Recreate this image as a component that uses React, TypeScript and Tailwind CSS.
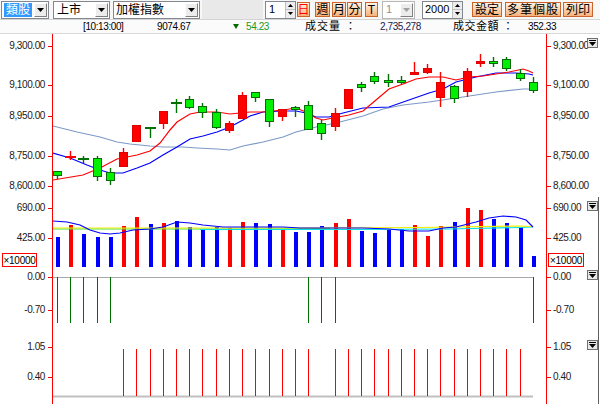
import React from "react"

// candle: [color, bodyTop, bodyBottom, wickTop, wickBottom] in page pixels
const candles: [string, number, number, number, number][] = [
  ["g", 171, 176, 171, 179],
  ["r", 157, 157, 151, 160],
  ["g", 159, 159, 156, 163],
  ["g", 158, 177, 156, 181],
  ["g", 172, 181, 168, 185],
  ["r", 152, 167, 148, 167],
  ["r", 125, 142, 125, 142],
  ["g", 128, 128, 128, 138],
  ["r", 111, 124, 111, 129],
  ["g", 103, 103, 99, 113],
  ["g", 99, 108, 96, 109],
  ["g", 106, 113, 103, 118],
  ["g", 112, 128, 109, 129],
  ["r", 123, 131, 121, 133],
  ["r", 95, 119, 92, 119],
  ["g", 92, 98, 92, 102],
  ["g", 99, 122, 99, 127],
  ["r", 109, 117, 109, 121],
  ["g", 107, 110, 106, 117],
  ["g", 105, 130, 101, 130],
  ["g", 123, 134, 120, 140],
  ["r", 113, 127, 108, 131],
  ["r", 89, 109, 89, 109],
  ["g", 84, 88, 82, 92],
  ["g", 76, 82, 72, 84],
  ["g", 80, 83, 74, 87],
  ["g", 80, 83, 76, 84],
  ["r", 72, 75, 62, 75],
  ["r", 68, 73, 64, 74],
  ["r", 82, 98, 72, 107],
  ["g", 86, 99, 85, 103],
  ["r", 71, 92, 68, 97],
  ["r", 61, 64, 54, 67],
  ["g", 61, 64, 57, 67],
  ["g", 59, 69, 57, 71],
  ["g", 73, 79, 69, 81],
  ["g", 82, 91, 77, 93],
]

const volumes: [number, string][] = [
  [237, "b"], [225, "r"], [234, "b"], [237, "b"], [237, "b"], [226, "r"], [217, "r"], [224, "b"],
  [223, "r"], [221, "b"], [227, "b"], [230, "b"], [227, "b"], [228, "r"], [222, "r"], [223, "b"],
  [224, "b"], [229, "r"], [232, "b"], [232, "b"], [226, "b"], [223, "r"], [219, "r"], [231, "b"],
  [233, "b"], [230, "b"], [229, "b"], [225, "r"], [236, "r"], [226, "r"], [222, "b"], [208, "r"],
  [210, "r"], [219, "b"], [223, "b"], [227, "b"], [256, "b"],
]

const negIdx = [0, 1, 2, 3, 4, 19, 20, 21, 36]
const posIdx = [5, 6, 7, 8, 9, 10, 11, 12, 13, 14, 15, 16, 17, 18, 19, 21, 22, 23, 24, 25, 26, 27, 28, 29, 30, 31, 32, 33, 34, 35]

const ma5 =
  "53,180 83,175 100,168 117,159 137,155 150,151 160,143 170,130 177,122 190,114 200,112 217,112 230,114 240,113 250,112 263,112 283,110 296,108 306,112 316,118 323,120 333,118 349,115 363,111 376,100 389,89 403,84 416,79 429,77 443,77 456,80 469,77 483,76 496,74 509,72 523,69 529,71 533,73"
const ma10 =
  "53,153 70,158 87,165 100,170 110,173 123,173 137,168 150,163 163,155 177,147 190,139 203,136 217,132 230,127 243,120 250,116 263,112 283,111 296,111 306,113 316,117 329,117 343,113 363,108 389,107 409,100 429,93 443,89 456,82 476,77 496,73 516,73 529,74 533,75"
const ma20 =
  "53,126 77,132 100,137 117,142 130,144 150,146 163,147 183,147 197,148 217,149 230,150 243,146 263,142 283,137 296,132 316,127 336,123 363,116 383,109 403,105 429,102 456,98 476,95 496,92 523,89 533,89"
const vma5 =
  "53,221 67,222 80,225 90,230 100,233 110,234 120,233 133,230 150,229 163,227 177,222 190,223 203,225 223,227 250,227 283,227 300,228 323,228 336,228 363,228 389,229 409,231 429,231 443,228 456,227 476,222 489,218 503,216 516,217 526,220 533,227"

const X = (i: number) => Math.round(57 + 13.22 * i)

const leftLabels = [
  { t: "9,300.00", y: 46 },
  { t: "9,100.00", y: 85 },
  { t: "8,950.00", y: 116 },
  { t: "8,750.00", y: 156 },
  { t: "8,600.00", y: 186 },
  { t: "690.00", y: 208 },
  { t: "425.00", y: 238 },
  { t: "0.00", y: 277 },
  { t: "-0.70", y: 310 },
  { t: "1.05", y: 347 },
  { t: "0.40", y: 377 },
]

function Arrow({ color = "#000" }: { color?: string }) {
  return (
    <svg width="7" height="4" viewBox="0 0 7 4">
      <path d="M0 0H7L3.5 4Z" fill={color} />
    </svg>
  )
}

function DropBtn({ dim = false }: { dim?: boolean }) {
  return (
    <span className="ml-auto mr-[1px] flex h-[14px] w-[13px] items-center justify-center border border-t-white border-l-white border-r-[#808080] border-b-[#808080] bg-[#ececec]">
      <Arrow color={dim ? "#a0a0a0" : "#000"} />
    </span>
  )
}

function Spin() {
  return (
    <span className="ml-auto flex h-full w-[10px] flex-col border-l border-[#c0c0c0] bg-[#ececec]">
      <span className="flex flex-1 items-center justify-center border-b border-[#c0c0c0]">
        <svg width="5" height="3" viewBox="0 0 5 3">
          <path d="M0 3H5L2.5 0Z" fill="#000" />
        </svg>
      </span>
      <span className="flex flex-1 items-center justify-center">
        <svg width="5" height="3" viewBox="0 0 5 3">
          <path d="M0 0H5L2.5 3Z" fill="#000" />
        </svg>
      </span>
    </span>
  )
}

function OBtn({ children, className }: { children: React.ReactNode; className: string }) {
  return (
    <span
      className={
        "flex h-[15px] items-center justify-center border border-[#c8642c] bg-linear-to-b from-[#fff2e4] to-[#f7b27a] text-[12px] leading-none " +
        className
      }
    >
      {children}
    </span>
  )
}

function Toolbar() {
  return (
    <div className="flex h-[20px] items-center border-b border-[#d4d4d4] bg-[#f7f7f7]">
      <div className="ml-[1px] flex h-[18px] w-[48px] items-center border border-[#828790] bg-white">
        <span className="ml-[2px] bg-[#3399ff] px-[2px] text-[12px] leading-[14px] text-white">類股</span>
        <DropBtn />
      </div>
      <div className="ml-[4px] flex h-[18px] w-[57px] items-center border border-[#828790] bg-white">
        <span className="ml-[3px] text-[12px] leading-[14px]">上市</span>
        <DropBtn />
      </div>
      <div className="ml-[3px] flex h-[18px] w-[87px] items-center border border-[#828790] bg-white">
        <span className="ml-[2px] text-[12px] leading-[14px]">加權指數</span>
        <DropBtn />
      </div>
      <div className="ml-[2px] h-[19px] w-[61px] bg-[#e9e9e9]" />
      <div className="ml-[2px] flex h-[18px] w-[31px] items-center border border-[#828790] bg-white">
        <span className="ml-[3px] text-[11px]">1</span>
        <Spin />
      </div>
      <OBtn className="ml-[1px] w-[13px] text-[#ff0000]">日</OBtn>
      <OBtn className="ml-[5px] w-[15px]">週</OBtn>
      <OBtn className="ml-[2px] w-[14px]">月</OBtn>
      <OBtn className="ml-[1px] w-[15px]">分</OBtn>
      <OBtn className="ml-[3px] w-[13px] text-[10px]">T</OBtn>
      <div className="ml-[4px] flex h-[18px] w-[33px] items-center border border-[#b8b8b8] bg-white">
        <span className="ml-[3px] text-[11px] text-[#909090]">1</span>
        <DropBtn dim />
      </div>
      <div className="ml-[7px] flex h-[18px] w-[41px] items-center border border-[#828790] bg-white">
        <span className="ml-[2px] text-[11px]">2000</span>
        <Spin />
      </div>
      <OBtn className="ml-[9px] w-[30px]">設定</OBtn>
      <OBtn className="ml-[3px] w-[56px] tracking-[1px]">多筆個股</OBtn>
      <OBtn className="ml-[2px] w-[30px]">列印</OBtn>
    </div>
  )
}

function InfoBar() {
  return (
    <div className="flex h-[14px] items-center border-b border-[#d8d8d8] bg-[#fbfbfb] text-[10px] leading-none tracking-[-0.4px]">
      <span className="ml-[83px] w-[74px]">[10:13:00]</span>
      <span className="w-[76px]">9074.67</span>
      <span className="flex w-[72px] items-center text-[#1c9a1c]">
        <svg width="6" height="5" viewBox="0 0 6 5" className="mr-[7px]">
          <path d="M0 0H6L3 5Z" fill="#006a00" />
        </svg>
        54.23
      </span>
      <span className="w-[75px] text-[11px] tracking-[1px]">成交量 ：</span>
      <span className="w-[73px] text-[#1a1a50]">2,735,278</span>
      <span className="w-[75px] text-[11px] tracking-[0.5px]">成交金額 ：</span>
      <span>352.33</span>
    </div>
  )
}

function Chart() {
  return (
    <svg width={493} height={370} viewBox="53 34 493 370" className="block">
      {/* moving averages */}
      <polyline points={ma20} fill="none" stroke="#7c9ac6" strokeWidth={1.2} />
      <polyline points={ma10} fill="none" stroke="#0000ff" strokeWidth={1.2} />
      <polyline points={ma5} fill="none" stroke="#ff0000" strokeWidth={1.2} />

      {candles.map(([c, bt, bb, wt, wb], i) => {
        const x = X(i)
        const dark = c === "g" ? "#007000" : "#ff0000"
        const fill = c === "g" ? "#00f000" : "#ff0000"
        const doji = bb - bt < 1
        return (
          <g key={i}>
            <line x1={x + 0.5} x2={x + 0.5} y1={wt} y2={wb} stroke={dark} strokeWidth={1.4} />
            {doji ? (
              <rect x={x - 5} y={bt - 1} width={11} height={2} fill={dark} />
            ) : (
              <rect
                x={x - 3.5}
                y={bt + 0.5}
                width={8}
                height={bb - bt - 1}
                fill={fill}
                stroke={c === "g" ? "#0a6a0a" : "#e00000"}
                strokeWidth={1}
                shapeRendering="crispEdges"
              />
            )}
          </g>
        )
      })}

      {/* volume */}
      {volumes.map(([top, c], i) => (
        <rect
          key={i}
          x={X(i) - 1.5}
          y={top}
          width={4}
          height={267 - top}
          fill={c === "r" ? "#ff0000" : "#0000ff"}
          shapeRendering="crispEdges"
        />
      ))}
      <polyline points="53,229 150,229 250,229 330,228.5" fill="none" stroke="#40e040" strokeWidth={1.2} />
      <polyline points="200,229.5 350,229.5 450,229 520,227.5 533,227" fill="none" stroke="#00e0e8" strokeWidth={1.2} />
      <polyline points="53,228 200,228 300,228 420,227.5 520,226 533,226.5" fill="none" stroke="#f0f000" strokeWidth={1.2} />
      <polyline points={vma5} fill="none" stroke="#0000ff" strokeWidth={1.2} />

      {/* panel 3 */}
      <line x1={53} x2={533} y1={277.5} y2={277.5} stroke="#a8a8a8" />
      {negIdx.map((i) => (
        <line key={i} x1={X(i) + 0.5} x2={X(i) + 0.5} y1={277} y2={323} stroke="#007000" />
      ))}

      {/* panel 4 */}
      <line x1={53} x2={533} y1={396.5} y2={396.5} stroke="#c0c0c0" strokeWidth={2} />
      {posIdx.map((i) => (
        <line key={i} x1={X(i) + 0.5} x2={X(i) + 0.5} y1={349} y2={396} stroke="#ff0000" />
      ))}
    </svg>
  )
}

function Ticks({ side }: { side: "l" | "r" }) {
  return (
    <>
      {leftLabels.map((l) => (
        <div
          key={l.t + side}
          className={
            side === "l"
              ? "absolute right-0 h-[1px] w-[4px] bg-[#ff0000]"
              : "absolute left-0 h-[1px] w-[4px] bg-[#ff0000]"
          }
          style={{ top: l.y - 34 }}
        />
      ))}
      {leftLabels.map((l) => (
        <div
          key={l.t}
          className={
            side === "l"
              ? "absolute right-[7px] h-[12px] text-[10px] leading-[12px] tracking-[-0.4px] text-[#202020]"
              : "absolute left-[6px] h-[12px] text-[10px] leading-[12px] tracking-[-0.4px] text-[#202020]"
          }
          style={{ top: l.y - 34 - 6 }}
        >
          {l.t}
        </div>
      ))}
    </>
  )
}

function MiniDrop({ className }: { className: string }) {
  return (
    <div
      className={
        "absolute left-[40px] flex h-[10px] w-[11px] flex-col items-center justify-center border border-[#707070] bg-[#e8e8e8] " +
        className
      }
    >
      <span className="mb-[1px] h-[1px] w-[7px] bg-black" />
      <Arrow />
    </div>
  )
}

export default function App() {
  return (
    <div className="h-[404px] w-[600px] overflow-hidden bg-white font-['Liberation_Sans','Noto_Sans_CJK_TC',sans-serif] text-black">
      <Toolbar />
      <InfoBar />
      <div className="flex h-[370px]">
        <div className="relative w-[53px] border-r border-[#ff0000]">
          <Ticks side="l" />
          <div className="absolute left-[2px] top-[219px] flex h-[14px] w-[35px] items-center justify-center border border-[#ff0000] text-[10px] tracking-[-0.3px]">
            ×10000
          </div>
        </div>
        <Chart />
        <div className="relative w-[54px] border-l border-[#ff0000]">
          <Ticks side="r" />
          <div className="absolute left-[1px] top-[219px] flex h-[14px] w-[36px] items-center justify-center border border-[#ff0000] text-[10px] tracking-[-0.3px]">
            ×10000
          </div>
          <MiniDrop className="top-[4px]" />
          <MiniDrop className="top-[167px]" />
          <MiniDrop className="top-[236px]" />
          <MiniDrop className="top-[306px]" />
          <div className="absolute left-[51px] top-[163px] bottom-0 w-[1px] bg-[#606060]" />
        </div>
      </div>
    </div>
  )
}
